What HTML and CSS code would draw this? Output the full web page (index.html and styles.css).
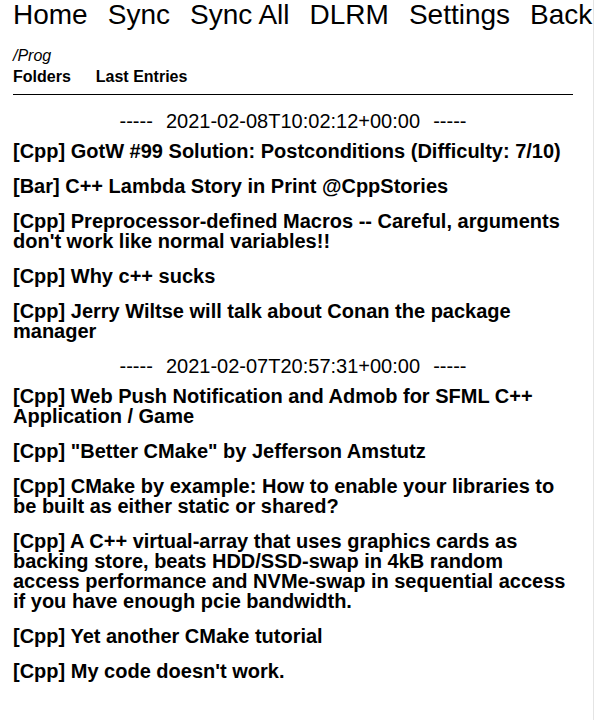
FILE: index.html
```html
<!DOCTYPE html>
<html lang="en">
<head>
<meta charset="utf-8">
<title>Prog</title>
<link rel="stylesheet" href="styles.css">
</head>
<body>
<div class="page">
  <nav class="nav">
    <a href="#">Home</a>
    <a href="#">Sync</a>
    <a href="#">Sync All</a>
    <a href="#">DLRM</a>
    <a href="#">Settings</a>
    <a href="#">Back</a>
  </nav>
  <div class="crumb">/Prog</div>
  <div class="tabs">
    <a href="#">Folders</a>
    <a href="#">Last Entries</a>
  </div>
  <div class="rule"></div>
  <main class="entries">
    <div class="date">-----&nbsp; <span class="stamp">2021-02-08T10:02:12+00:00</span> &nbsp;-----</div>
    <a class="entry" href="#">[Cpp] GotW #99 Solution: Postconditions (Difficulty: 7/10)</a>
    <a class="entry" href="#">[Bar] C++ Lambda Story in Print @CppStories</a>
    <a class="entry" href="#">[Cpp] Preprocessor-defined Macros -- Careful, arguments don't work like normal variables!!</a>
    <a class="entry" href="#">[Cpp] Why c++ sucks</a>
    <a class="entry" href="#">[Cpp] Jerry Wiltse will talk about Conan the package manager</a>
    <div class="date">-----&nbsp; <span class="stamp">2021-02-07T20:57:31+00:00</span> &nbsp;-----</div>
    <a class="entry" href="#">[Cpp] Web Push Notification and Admob for SFML C++ Application / Game</a>
    <a class="entry" href="#">[Cpp] "Better CMake" by Jefferson Amstutz</a>
    <a class="entry" href="#">[Cpp] CMake by example: How to enable your libraries to be built as either static or shared?</a>
    <a class="entry" href="#">[Cpp] A C++ virtual-array that uses graphics cards as backing store, beats HDD/SSD-swap in 4kB random access performance and NVMe-swap in sequential access if you have enough pcie bandwidth.</a>
    <a class="entry" href="#">[Cpp] Yet another CMake tutorial</a>
    <a class="entry" href="#">[Cpp] My code doesn't work.</a>
  </main>
</div>
</body>
</html>
```

FILE: styles.css
```css
html, body {
  margin: 0;
  padding: 0;
  background: #fff;
}

body {
  font-family: "Liberation Sans", Arial, sans-serif;
  color: #000;
}

a {
  color: #000;
  text-decoration: none;
}

.page {
  width: 560px;
  min-height: 720px;
  padding: 0 20px 0 13px;
  border-right: 1px solid #e4e4e4;
}

.nav {
  display: flex;
  gap: 20px;
  white-space: nowrap;
  font-size: 28px;
  line-height: 30px;
  height: 30px;
}

.crumb {
  margin-top: 17px;
  font-size: 16px;
  line-height: 18px;
  font-style: italic;
}

.tabs {
  margin-top: 3px;
  display: flex;
  gap: 25px;
  font-size: 16px;
  line-height: 18px;
  font-weight: bold;
}

.rule {
  margin-top: 8px;
  border-top: 1px solid #000;
}

.entries {
  display: flex;
  flex-direction: column;
  padding-top: 16px;
}

.date {
  font-size: 20px;
  line-height: 20px;
  text-align: center;
  margin-bottom: 10px;
  white-space: nowrap;
}

.stamp {
  margin: 0 2px;
}

.entry {
  display: block;
  font-size: 20px;
  line-height: 20px;
  font-weight: bold;
  margin-bottom: 15px;
}
```
